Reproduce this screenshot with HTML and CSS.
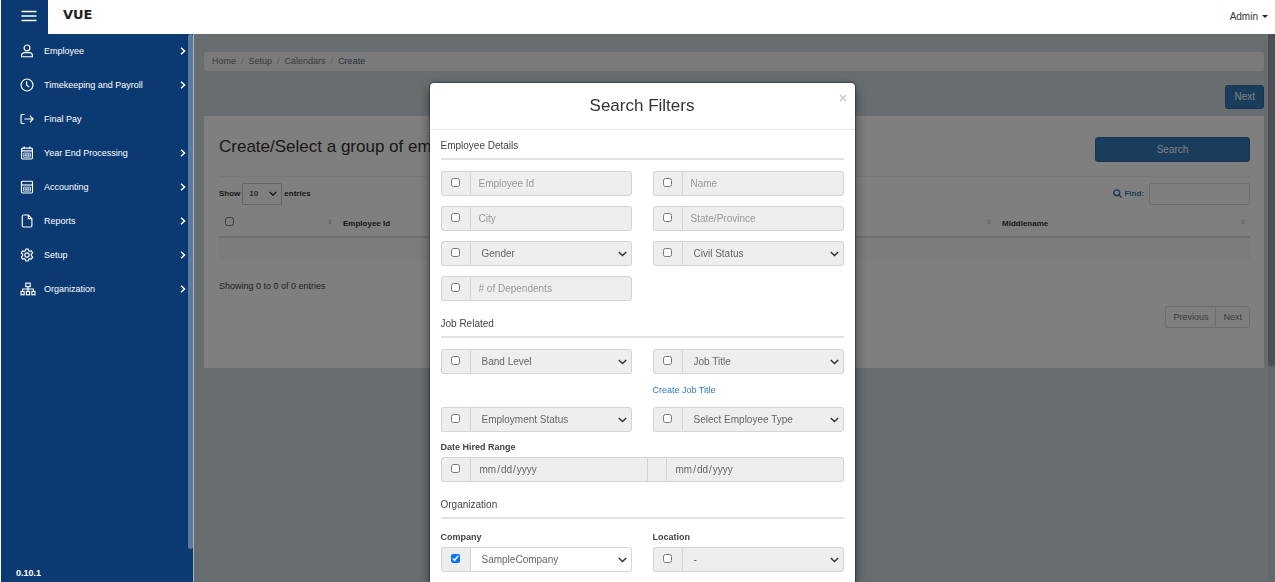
FILE: index.html
```html
<!DOCTYPE html>
<html lang="en">
<head>
<meta charset="utf-8">
<meta name="viewport" content="width=device-width, initial-scale=1">
<title>VUE - Search Filters</title>
<link rel="stylesheet" href="styles.css">
</head>
<body>
<div class="app">
  <header class="topbar">
    <button class="menu-toggle" type="button" aria-label="Toggle menu">
      <svg width="16" height="12" viewBox="0 0 16 12" fill="none" stroke="#fff" stroke-width="1.5"><path d="M0.500 1.500h15M0.500 6h15M0.500 10.500h15"/></svg>
    </button>
    <a class="brand" href="#">VUE</a>
    <button class="account" type="button">Admin <span class="caret"></span></button>
  </header>

  <nav class="sidebar" aria-label="Main">
    <ul class="menu">
      <li><a class="menu-link" href="#">
        <svg class="icon" viewBox="0 0 16 16"><circle cx="8" cy="4.500" r="3.300"/><path d="M1.800 14.600v-1.300a3.500 3.500 0 0 1 3.500-3.500h5.400a3.500 3.500 0 0 1 3.500 3.500v1.300z"/></svg>
        <span>Employee</span><svg class="chevron" viewBox="0 0 6 8"><path d="M1 0.800 4.500 4 1 7.200"/></svg></a></li>
      <li><a class="menu-link" href="#">
        <svg class="icon" viewBox="0 0 16 16"><circle cx="8" cy="8" r="6.800"/><path d="M7.600 3.800V8.300l3 2"/></svg>
        <span>Timekeeping and Payroll</span><svg class="chevron" viewBox="0 0 6 8"><path d="M1 0.800 4.500 4 1 7.200"/></svg></a></li>
      <li><a class="menu-link" href="#">
        <svg class="icon" viewBox="0 0 16 16"><path d="M5.200 2.800H2.500Q1.200 2.800 1.200 4.100v7.800q0 1.300 1.300 1.300h2.700M5 8h9.800M11.300 4.300 15 8l-3.700 3.700"/></svg>
        <span>Final Pay</span></a></li>
      <li><a class="menu-link" href="#">
        <svg class="icon" viewBox="0 0 16 16"><rect x="1.800" y="2.500" width="12.400" height="12.300" rx="1.300"/><path d="M1.800 5.500h12.400M4.800 0.500v3M11.200 0.500v3"/><path class="thin" d="M4.200 8h7.600v4.800H4.200zM4.200 10.400h7.600M6.700 8v4.800M9.300 8v4.800"/></svg>
        <span>Year End Processing</span><svg class="chevron" viewBox="0 0 6 8"><path d="M1 0.800 4.500 4 1 7.200"/></svg></a></li>
      <li><a class="menu-link" href="#">
        <svg class="icon" viewBox="0 0 16 16"><rect x="1.700" y="1.400" width="12.600" height="13.400" rx="1"/><path d="M1.700 5.700h12.600"/><path class="thin" d="M4 8.200h8v4.600H4zM4 10.500h8M6.700 8.200v4.600M9.300 8.200v4.600"/></svg>
        <span>Accounting</span><svg class="chevron" viewBox="0 0 6 8"><path d="M1 0.800 4.500 4 1 7.200"/></svg></a></li>
      <li><a class="menu-link" href="#">
        <svg class="icon" viewBox="0 0 16 16"><path d="M9.500 1.200H4Q2.600 1.200 2.600 2.600v10.800q0 1.400 1.400 1.400h8.200q1.400 0 1.400-1.400V5.300zM9.500 1.200v4.100h4.100"/></svg>
        <span>Reports</span><svg class="chevron" viewBox="0 0 6 8"><path d="M1 0.800 4.500 4 1 7.200"/></svg></a></li>
      <li><a class="menu-link" href="#">
        <svg class="icon" viewBox="0 0 16 16"><circle cx="8" cy="8" r="2.500"/><path d="M6.700 1.200h2.600l.6 1.900 1.200.7 2-.5 1.300 2.300-1.400 1.600v1.600l1.400 1.600-1.300 2.300-2-.5-1.200.7-.6 1.900H6.700l-.6-1.900-1.200-.7-2 .5-1.300-2.300L3 8.800V7.200L1.600 5.600l1.300-2.300 2 .5 1.200-.7z"/></svg>
        <span>Setup</span><svg class="chevron" viewBox="0 0 6 8"><path d="M1 0.800 4.500 4 1 7.200"/></svg></a></li>
      <li><a class="menu-link" href="#">
        <svg class="icon icon-wide" viewBox="0 0 18 16"><rect x="6.500" y="1.300" width="5" height="4"/><path d="M9 5.300v5M2.800 10.300V8h12.400v2.300"/><rect x="1" y="10.800" width="3.600" height="3.800"/><rect x="7.200" y="10.800" width="3.600" height="3.800"/><rect x="13.400" y="10.800" width="3.600" height="3.800"/></svg>
        <span>Organization</span><svg class="chevron" viewBox="0 0 6 8"><path d="M1 0.800 4.500 4 1 7.200"/></svg></a></li>
    </ul>
    <p class="version">0.10.1</p>
    <div class="side-scroll"></div>
  </nav>

  <main class="content">
    <div class="page">
      <ol class="breadcrumb">
        <li><a href="#">Home</a></li>
        <li><a href="#">Setup</a></li>
        <li><a href="#">Calendars</a></li>
        <li><a class="current" href="#">Create</a></li>
      </ol>
      <div class="actions"><button class="btn" type="button">Next</button></div>
      <section class="panel">
        <div class="panel-head">
          <h1>Create/Select a group of employees</h1>
          <button class="btn btn-search" type="button">Search</button>
        </div>
        <div class="table-tools">
          <label class="length">Show
            <select><option>10</option><option>25</option></select>
            entries</label>
          <label class="find">
            <span><svg width="9" height="9" viewBox="0 0 10 10" fill="none" stroke="currentColor" stroke-width="1.600"><circle cx="4.200" cy="4.200" r="3.200"/><path d="m6.500 6.500 3 3"/></svg> Find:</span>
            <input type="search"></label>
        </div>
        <table class="grid">
          <thead><tr>
            <th class="col-check"><input type="checkbox" aria-label="Select all"></th>
            <th>Employee Id</th><th>Firstname</th><th>Lastname</th><th class="col-last">Middlename</th>
          </tr></thead>
          <tbody><tr><td colspan="5"></td></tr></tbody>
        </table>
        <p class="info">Showing 0 to 0 of 0 entries</p>
        <div class="pager"><button type="button">Previous</button><button type="button">Next</button></div>
      </section>
    </div>
    <div class="scroll-track"><div class="scroll-thumb"></div></div>
  </main>
</div>

<div class="backdrop">
  <div class="modal" role="dialog" aria-labelledby="modal-title">
    <div class="modal-head">
      <h2 id="modal-title">Search Filters</h2>
      <button class="close" type="button" aria-label="Close"><svg width="8" height="8" viewBox="0 0 8 8" fill="none" stroke="#c4c4c4" stroke-width="1.300"><path d="m1 1 6 6M7 1 1 7"/></svg></button>
    </div>
    <form class="modal-body">
      <h3>Employee Details</h3>
      <div class="fields">
        <div class="group"><span class="addon"><input type="checkbox" aria-label="Use employee id"></span><input class="control" type="text" placeholder="Employee Id" aria-label="Employee Id" disabled></div>
        <div class="group"><span class="addon"><input type="checkbox" aria-label="Use name"></span><input class="control" type="text" placeholder="Name" aria-label="Name" disabled></div>
        <div class="group"><span class="addon"><input type="checkbox" aria-label="Use city"></span><input class="control" type="text" placeholder="City" aria-label="City" disabled></div>
        <div class="group"><span class="addon"><input type="checkbox" aria-label="Use state"></span><input class="control" type="text" placeholder="State/Province" aria-label="State/Province" disabled></div>
        <div class="group"><span class="addon"><input type="checkbox" aria-label="Use gender"></span><select class="control" aria-label="Gender" disabled><option>Gender</option></select></div>
        <div class="group"><span class="addon"><input type="checkbox" aria-label="Use civil status"></span><select class="control" aria-label="Civil Status" disabled><option>Civil Status</option></select></div>
        <div class="group"><span class="addon"><input type="checkbox" aria-label="Use dependents"></span><input class="control" type="text" placeholder="# of Dependents" aria-label="# of Dependents" disabled></div>
      </div>

      <h3>Job Related</h3>
      <div class="fields">
        <div class="group"><span class="addon"><input type="checkbox" aria-label="Use band level"></span><select class="control" aria-label="Band Level" disabled><option>Band Level</option></select></div>
        <div class="stack">
          <div class="group"><span class="addon"><input type="checkbox" aria-label="Use job title"></span><select class="control" aria-label="Job Title" disabled><option>Job Title</option></select></div>
          <a class="create-link" href="#">Create Job Title</a>
        </div>
        <div class="group"><span class="addon"><input type="checkbox" aria-label="Use employment status"></span><select class="control" aria-label="Employment Status" disabled><option>Employment Status</option></select></div>
        <div class="group"><span class="addon"><input type="checkbox" aria-label="Use employee type"></span><select class="control" aria-label="Employee Type" disabled><option>Select Employee Type</option></select></div>
      </div>
      <div class="date-range">
        <label class="field-label" for="hired-from">Date Hired Range</label>
        <div class="group">
          <span class="addon"><input type="checkbox" aria-label="Use date hired"></span>
          <input class="control" id="hired-from" type="date" disabled>
          <span class="addon addon-gap"></span>
          <input class="control" type="date" aria-label="Date hired to" disabled>
        </div>
      </div>

      <h3>Organization</h3>
      <div class="fields">
        <div>
          <label class="field-label" for="company">Company</label>
          <div class="group"><span class="addon"><input type="checkbox" aria-label="Use company" checked></span><select class="control" id="company"><option>SampleCompany</option></select></div>
        </div>
        <div>
          <label class="field-label" for="location">Location</label>
          <div class="group"><span class="addon"><input type="checkbox" aria-label="Use location"></span><select class="control" id="location" disabled><option>-</option></select></div>
        </div>
      </div>
    </form>
  </div>
</div>
</body>
</html>
```
FILE: styles.css
```css
* { box-sizing: border-box; }

body {
  margin: 0;
  font-family: "Liberation Sans", Arial, sans-serif;
  font-size: 9px;
  line-height: 14px;
  color: #333;
  background: #fff;
  overflow: hidden;
}

button, input, select { font: inherit; color: inherit; margin: 0; }
button { cursor: pointer; }
a { text-decoration: none; color: inherit; }
h1, h2, h3, p, ul, ol { margin: 0; padding: 0; font-weight: normal; }
ul, ol { list-style: none; }
input[type="checkbox"] { width: 9px; height: 9px; }

.app {
  display: grid;
  grid-template: 34px 1fr / 194px 1fr;
  height: 100vh;
}

/* Top bar */
.topbar {
  grid-column: 1 / -1;
  position: relative;
  z-index: 20;
  display: flex;
  align-items: stretch;
  background: #fff;
  padding-left: 1px;
}
.menu-toggle {
  display: flex;
  justify-content: center;
  align-items: center;
  width: 47px;
  padding: 0 0 3px 8px;
  border: 0;
  background: #0b3a72;
}
.brand {
  padding: 7px 0 0 15px;
  font-family: "DejaVu Sans", sans-serif;
  font-weight: bold;
  font-size: 13px;
  line-height: 16px;
  color: #222;
}
.account {
  display: flex;
  align-items: center;
  gap: 4px;
  margin-left: auto;
  padding: 0 7px 1px;
  border: 0;
  background: none;
  font-size: 10px;
}
.caret {
  border: 3px solid transparent;
  border-top-color: #222;
  border-bottom: 0;
}

/* Sidebar */
.sidebar {
  position: relative;
  z-index: 20;
  display: flex;
  flex-direction: column;
  justify-content: space-between;
  border-left: 1px solid #fff;
  border-right: 1px solid #a9b4c0;
  background: #0b3a72;
  color: #fff;
}
.menu-link {
  display: grid;
  grid-template-columns: 16px 1fr 6px;
  align-items: center;
  gap: 8px;
  height: 34px;
  padding: 0 7px 0 19px;
}
.icon {
  width: 14px;
  height: 14px;
  fill: none;
  stroke: #fff;
  stroke-width: 1.3;
  overflow: visible;
}
.icon-wide { width: 16px; }
.icon .thin { stroke-width: 0.8; }
.chevron {
  width: 6px;
  height: 8px;
  fill: none;
  stroke: #fff;
  stroke-width: 1.5;
}
.version { padding: 0 15px 2px; font-weight: bold; }
.side-scroll {
  position: absolute;
  top: 0;
  right: 0;
  width: 5px;
  height: 94%;
  border-radius: 3px;
  background: #5c7aa0;
}

/* Page behind the dialog */
.content {
  display: flex;
  background: #d1dae1;
}
.page {
  flex: 1;
  padding: 18px 4px 0 10px;
}
.breadcrumb {
  display: flex;
  padding: 2px 8px 3px;
  border-radius: 3px;
  background: #f5f5f5;
  color: #777;
}
.breadcrumb li + li::before {
  content: "/";
  padding: 0 5px;
  color: #bbb;
}
.breadcrumb .current { color: #56657f; }
.actions {
  display: flex;
  justify-content: flex-end;
  padding: 14px 0 7px;
}
.btn {
  height: 24px;
  padding: 0 8px;
  border: 1px solid #2e6da4;
  border-radius: 3px;
  background: #337ab7;
  color: #fff;
  font-size: 10px;
}
.panel {
  min-height: 252px;
  padding: 21px 14px 0 15px;
  background: #fff;
}
.panel-head {
  display: flex;
  justify-content: space-between;
  align-items: flex-start;
  height: 40px;
  border-bottom: 1px solid #eee;
}
.panel-head h1 { font-size: 17px; line-height: 20px; }
.btn-search { width: 155px; height: 25px; }
.table-tools {
  display: flex;
  justify-content: space-between;
  padding-top: 6px;
  font-size: 8px;
  font-weight: bold;
}
.length { display: flex; align-items: center; gap: 2px; height: 22px; }
.length select {
  appearance: none;
  width: 40px;
  height: 22px;
  padding: 0 6px;
  border: 1px solid #ccc;
  border-radius: 1px;
  color: #555;
  background: #fff url("data:image/svg+xml,%3Csvg xmlns='http://www.w3.org/2000/svg' width='8' height='6'%3E%3Cpath d='M.8 1 4 4.200 7.200 1' fill='none' stroke='%23333' stroke-width='1.500'/%3E%3C/svg%3E") no-repeat right 4px center;
}
.find {
  display: flex;
  align-items: center;
  gap: 5px;
  color: #337ab7;
}
.find svg { vertical-align: -2px; }
.find input {
  width: 101px;
  height: 22px;
  border: 1px solid #ddd;
  border-radius: 2px;
  background: #fff;
}
.grid {
  width: 100%;
  table-layout: fixed;
  border-collapse: collapse;
}
.grid th {
  height: 32px;
  padding: 7px 6px 0;
  border-bottom: 2px solid #ddd;
  text-align: left;
  font-size: 8px;
  background: url("data:image/svg+xml,%3Csvg xmlns='http://www.w3.org/2000/svg' width='4' height='6'%3E%3Cpath d='M0 2.500 2 0l2 2.500zM0 3.500 2 6l2-2.500z' fill='%23ccc'/%3E%3C/svg%3E") no-repeat right 5px top 14px;
}
.grid .col-check { width: 118px; padding-top: 2px; }
.grid .col-last { width: 254px; }
.grid th input { display: block; }
.grid td { height: 23px; background: #f9f9f9; }
.info { padding-top: 19px; color: #444; }
.pager {
  display: flex;
  justify-content: flex-end;
  padding-top: 13px;
}
.pager button {
  height: 22px;
  padding: 0 7px;
  border: 1px solid #ddd;
  background: #fff;
  color: #777;
}
.pager button:first-child { border-right: 0; border-radius: 3px 0 0 3px; }
.pager button:last-child { border-radius: 0 3px 3px 0; }
.scroll-track { width: 7px; background: #c6d0d8; }
.scroll-thumb { height: 332px; border-radius: 0 0 3px 3px; background: #98a0a8; }

/* Dialog */
.backdrop {
  position: fixed;
  inset: 0;
  z-index: 10;
  display: flex;
  justify-content: center;
  align-items: flex-start;
  padding: 83px 0 0 9px;
  overflow: hidden;
  background: rgba(0, 0, 0, 0.5);
}
.modal {
  width: 425px;
  padding-bottom: 20px;
  border-radius: 4px;
  background: #fff;
  box-shadow: 0 0 1px 1px rgba(0, 0, 0, 0.3), 0 4px 12px rgba(0, 0, 0, 0.5);
}
.modal-head {
  display: grid;
  grid-template-columns: 1fr auto 1fr;
  height: 47px;
  padding: 11px 8px 0;
  border-bottom: 1px solid #e8e8e8;
}
.modal-head h2 {
  grid-column: 2;
  font-size: 17px;
  line-height: 24px;
}
.close {
  display: flex;
  align-self: start;
  justify-self: end;
  padding: 0;
  border: 0;
  background: none;
}
.modal-body { padding: 9px 11px; font-size: 10px; color: #555; }
.modal-body h3 {
  margin-bottom: 11px;
  padding-bottom: 5px;
  border-bottom: 2px solid #e2e2e2;
  font-size: 10px;
  color: #444;
}
.fields + h3, .date-range + h3 { margin-top: 16px; }
.fields {
  display: grid;
  grid-template-columns: 1fr 1fr;
  align-items: start;
  gap: 10px 21px;
}
.group { display: flex; height: 25px; }
.addon {
  display: flex;
  justify-content: center;
  align-items: center;
  flex: none;
  width: 29px;
  padding-bottom: 2px;
  border: 1px solid #d4d4d4;
  border-right: 0;
  border-radius: 3px 0 0 3px;
  background: #eee;
}
.addon-gap { width: 18px; border-left: 0; border-radius: 0; }
.control {
  flex: 1;
  min-width: 0;
  padding: 0 8px;
  border: 1px solid #d4d4d4;
  border-radius: 0 3px 3px 0;
  background-color: #fff;
  color: #666;
}
.control:disabled { background-color: #eee; opacity: 1; }
.control:has(+ .addon) { border-radius: 0; }
.control:not([type="text"]):not(select) + .addon + .control { border-radius: 0 3px 3px 0; }
.control::placeholder { color: #999; }
.control::-webkit-calendar-picker-indicator { display: none; }
select.control {
  appearance: none;
  padding: 0 11px;
  background-image: url("data:image/svg+xml,%3Csvg xmlns='http://www.w3.org/2000/svg' width='9' height='6'%3E%3Cpath d='M.8 1 4.500 4.500 8.200 1' fill='none' stroke='%23333' stroke-width='1.500'/%3E%3C/svg%3E");
  background-repeat: no-repeat;
  background-position: right 4px center;
}
.stack { display: flex; flex-direction: column; gap: 9px; }
.create-link { font-size: 9px; color: #337ab7; }
.date-range { margin-top: 8px; }
.field-label {
  display: block;
  margin-bottom: 3px;
  font-size: 9px;
  font-weight: bold;
  color: #444;
}
```
